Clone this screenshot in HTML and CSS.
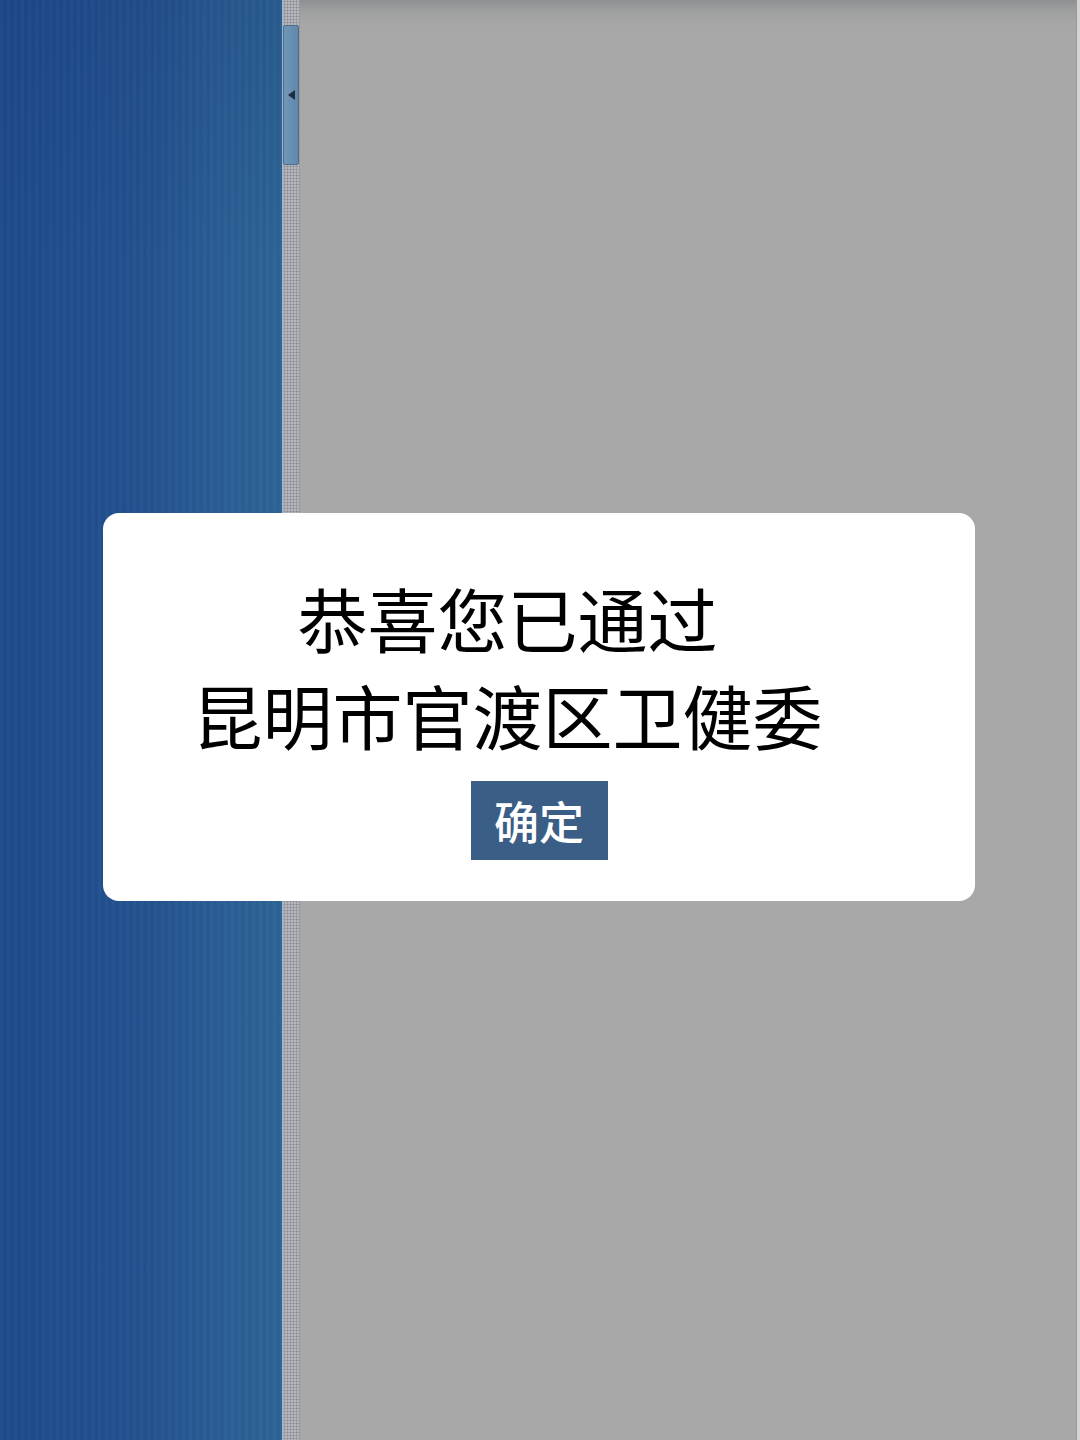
FILE: index.html
```html
<!DOCTYPE html>
<html lang="zh-CN">
<head>
<meta charset="utf-8">
<title>提示</title>
<link rel="stylesheet" href="styles.css">
</head>
<body>
<div class="screen">
  <aside class="sidebar"></aside>
  <div class="splitter">
    <div class="handle"><span class="arrow"></span></div>
  </div>
  <main class="content"></main>
  <div class="edge"></div>
</div>
<div class="dialog">
  <div class="message">
    <p class="line">恭喜您已通过</p>
    <p class="line">昆明市官渡区卫健委</p>
  </div>
  <button class="ok">确定</button>
</div>
</body>
</html>
```
FILE: styles.css
```css
html, body {
  margin: 0;
  padding: 0;
  width: 1080px;
  height: 1440px;
  overflow: hidden;
  font-family: "Noto Sans CJK SC", "Noto Sans", sans-serif;
}

.screen {
  display: flex;
  width: 1080px;
  height: 1440px;
}

.sidebar {
  width: 282px;
  flex: none;
  background:
    repeating-linear-gradient(90deg, rgba(255,255,255,0.02) 0px, rgba(255,255,255,0.02) 3px, rgba(0,0,0,0.02) 3px, rgba(0,0,0,0.02) 7px),
    linear-gradient(180deg, rgba(20,50,110,0.18) 0%, rgba(0,0,0,0) 18%),
    linear-gradient(90deg, #1f4b8c 0%, #214f8f 30%, #24538f 55%, #2a5d95 75%, #2d6496 100%);
}

.splitter {
  width: 18px;
  flex: none;
  background-color: #b4b8bc;
  background-image: radial-gradient(circle, #8e9296 0.9px, transparent 1.2px);
  background-size: 3px 3px;
  padding-top: 25px;
  border-left: 1px solid #9fb6cc;
  box-sizing: border-box;
}

.handle {
  height: 140px;
  margin-right: 1px;
  border: 1px solid #4f6d88;
  border-radius: 2px;
  background: linear-gradient(90deg, #7097b8, #6088ac);
  display: flex;
  align-items: flex-start;
  justify-content: center;
  padding-top: 64px;
  box-sizing: border-box;
}

.arrow {
  width: 0;
  height: 0;
  border-top: 5px solid transparent;
  border-bottom: 5px solid transparent;
  border-right: 7px solid #1c2d40;
}

.content {
  flex: 1;
  background:
    linear-gradient(180deg, #8e8f90 0px, #9d9e9f 10px, #a6a6a6 22px, rgba(168,168,168,0) 40px),
    #a8a8a8;
}

.edge {
  width: 3px;
  flex: none;
  background: #d4d4d4;
  border-left: 1px solid #9a9a9a;
}

.dialog {
  position: absolute;
  left: 103px;
  top: 513px;
  width: 872px;
  height: 388px;
  background: #ffffff;
  border-radius: 16px;
  box-sizing: border-box;
  padding-top: 56px;
  display: flex;
  flex-direction: column;
  align-items: center;
}

.message {
  padding-right: 63px;
  text-align: center;
}

.line {
  margin: 0;
  font-size: 70px;
  line-height: 97px;
  color: #000;
  font-weight: 400;
  white-space: nowrap;
}

.ok {
  margin-top: 18px;
  width: 137px;
  height: 79px;
  border: none;
  border-radius: 0;
  background: #3a5e86;
  color: #ffffff;
  font-family: "Noto Sans CJK SC", "Noto Sans", sans-serif;
  font-size: 45px;
  font-weight: 500;
  line-height: 79px;
  padding: 0;
}
```
